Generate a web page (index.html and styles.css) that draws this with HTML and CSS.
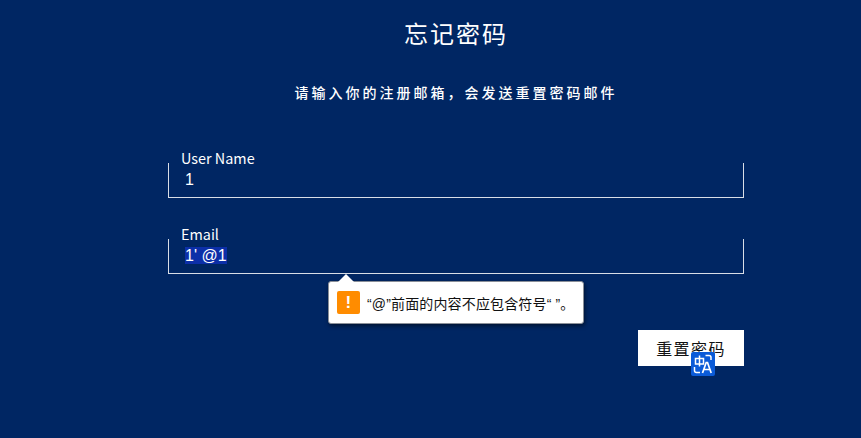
FILE: index.html
```html
<!DOCTYPE html>
<html lang="zh-CN">
<head>
    <meta charset="UTF-8">
    <meta name="viewport" content="width=device-width, initial-scale=1.0">
    <title>忘记密码</title>
    <link rel="stylesheet" href="styles.css">
</head>
<body>

<div class="container">
    <h1>忘记密码</h1>
    <p class="hint">请输入你的注册邮箱，会发送重置密码邮件</p>

    <form class="form">
        <div class="field">
            <label>User Name</label>
            <div class="box"><span>1</span></div>
        </div>

        <div class="field field-email">
            <label>Email</label>
            <div class="box"><span class="selected">1' @1</span></div>

            <!-- 校验提示 -->
            <div class="tip">
                <span class="tip-icon">!</span>
                <span class="tip-text">“@”前面的内容不应包含符号“ ”。</span>
            </div>
        </div>

        <div class="actions">
            <button type="button" class="submit">重置密码
                <svg class="translate" width="24" height="24" viewBox="0 0 24 24">
                    <rect width="24" height="24" rx="2" fill="#0b5bd8"/>
                    <path d="M4.500 6.500h8v5.500h-8zM8.500 3.500v11" fill="none" stroke="#fff" stroke-width="1.500"/>
                    <path d="M3.500 15v3.500a2 2 0 0 0 2 2H9M14.500 3.500H18a2 2 0 0 1 2 2V8" fill="none" stroke="#fff" stroke-width="1.500"/>
                    <path d="M11.500 21l3.700-10.500h1.300L20.200 21M13 17.500h5.700" fill="none" stroke="#fff" stroke-width="1.700"/>
                </svg>
            </button>
        </div>
    </form>
</div>

</body>
</html>
```

FILE: styles.css
```css
body {
    margin: 0;
    height: 438px;
    overflow: hidden;
    background-color: #002663;
    color: #fff;
    font-family: "Noto Sans CJK SC", "Noto Sans", sans-serif;
}

.container {
    width: 576px;
    margin-left: 168px;
    padding-top: 15px;
}

h1 {
    margin: 0;
    height: 36px;
    font-size: 24px;
    font-weight: 400;
    line-height: 36px;
    letter-spacing: 2px;
    text-align: center;
    color: #fff;
}

.hint {
    margin: 30px 0 0;
    height: 22px;
    font-size: 14px;
    font-weight: 500;
    line-height: 22px;
    letter-spacing: 3px;
    text-align: center;
}

.form {
    margin-top: 47px;
}

.field {
    position: relative;
    height: 47px;
}

.field-email {
    margin-top: 29px;
}

label {
    display: block;
    height: 18px;
    padding-left: 13px;
    font-size: 14.4px;
    line-height: 16px;
    color: #fff;
}

.box {
    margin-top: -5px;
    border: 1px solid #d8dde6;
    border-top: 0;
    padding-left: 16px;
    font-family: "Liberation Sans", sans-serif;
    font-size: 16px;
    line-height: 34px;
    box-sizing: border-box;
    height: 35px;
}

.selected {
    background-color: #0c2fa8;
}

.tip {
    position: absolute;
    left: 160px;
    top: 55px;
    width: 256px;
    height: 43px;
    display: flex;
    align-items: center;
    background-color: #fff;
    border: 1px solid #8a8f98;
    border-radius: 3px;
    box-shadow: 1px 2px 4px rgba(0, 0, 0, 0.5);
    color: #111;
    font-family: "Liberation Sans", "Noto Sans CJK SC", sans-serif;
    font-size: 14px;
    letter-spacing: 0.15px;
    box-sizing: border-box;
    padding-left: 8px;
}

.tip:before {
    content: "";
    position: absolute;
    left: 9px;
    top: -8px;
    border-left: 8px solid transparent;
    border-right: 8px solid transparent;
    border-bottom: 8px solid #fff;
}

.tip-icon {
    width: 23px;
    height: 23px;
    margin-right: 7px;
    border-radius: 2px;
    background-color: #ff8c00;
    color: #fff;
    font-family: "Liberation Sans", sans-serif;
    font-size: 17px;
    font-weight: bold;
    line-height: 23px;
    text-align: center;
}

.actions {
    display: flex;
    justify-content: flex-end;
    margin-top: 57px;
}

.submit {
    position: relative;
    width: 106px;
    height: 36px;
    padding: 0;
    border: none;
    background-color: #fff;
    color: #111;
    font-family: "Noto Sans CJK SC", sans-serif;
    font-size: 16px;
    letter-spacing: 1.4px;
}

.translate {
    position: absolute;
    left: 53px;
    top: 22px;
}
```
